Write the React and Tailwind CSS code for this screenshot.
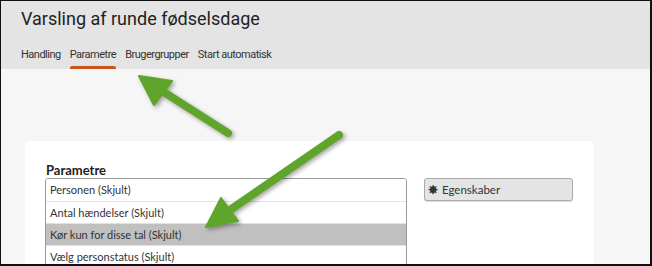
import React from "react";

const rows = [
  { label: "Personen (Skjult)" },
  { label: "Antal hændelser (Skjult)" },
  { label: "Kør kun for disse tal (Skjult)", active: true },
  { label: "Vælg personstatus (Skjult)" },
];

const tabs = ["Handling", "Parametre", "Brugergrupper", "Start automatisk"];

function Arrows() {
  return (
    <svg
      className="absolute inset-0 pointer-events-none"
      width="652"
      height="266"
      viewBox="0 0 652 266"
      style={{ filter: "drop-shadow(2px 2px 2px rgba(0,0,0,0.35))" }}
    >
      <g fill="#5fa42b" stroke="#5fa42b" strokeLinecap="round" strokeLinejoin="round">
        <line x1="227" y1="132" x2="158" y2="88" strokeWidth="8" />
        <polygon points="138,75 171,80 153,104" strokeWidth="2" />
        <line x1="338" y1="134" x2="226" y2="211" strokeWidth="8" />
        <polygon points="205,226 220,197 237,220" strokeWidth="2" />
      </g>
    </svg>
  );
}

export default function App() {
  return (
    <div className="relative w-[652px] h-[266px] overflow-hidden bg-[#f6f6f6] border-l border-t border-r-2 border-b-2 border-[#111] font-['Lato',sans-serif]">
      <div className="h-[68px] bg-[#e4e4e4] pl-[20px]">
        <h1 className="pt-[5px] text-[18px] leading-[26px] text-[#222] font-['Roboto',sans-serif]">
          Varsling af runde fødselsdage
        </h1>
        <div className="mt-[12px] flex gap-[9px] text-[11px] text-[#333] font-['Roboto',sans-serif] tracking-[-0.5px]">
          {tabs.map((t) => (
            <div key={t} className="relative h-[25px] leading-[22px]">
              {t}
              {t === "Parametre" && (
                <div className="absolute left-0 right-0 bottom-0 h-[3px] rounded-t-[2px] bg-[#c8561c]" />
              )}
            </div>
          ))}
        </div>
      </div>

      <div className="mt-[72px] ml-[24px] w-[569px] h-[140px] bg-white rounded-[5px] pt-[21px] pl-[20px] flex gap-[17px]">
        <div className="w-[362px]">
          <div className="text-[13px] font-bold text-[#222] leading-[16px] pl-[1px]">Parametre</div>
          <div className="border border-[#9a9a9a] rounded-t-[3px] overflow-hidden">
            {rows.map((r, i) => (
              <div
                key={r.label}
                className={`h-[22px] leading-[21px] pl-[4px] text-[11px] text-[#333] ${
                  i > 0 ? "border-t border-[#e2e2e2]" : ""
                } ${r.active ? "bg-[#c0c0c0]" : "bg-white"}`}
              >
                {r.label}
              </div>
            ))}
          </div>
        </div>
        <div className="pt-[16px]">
          <div className="w-[149px] h-[23px] bg-[#e4e4e4] border border-[#ababab] rounded-[3px] shadow-[0_1px_1px_rgba(0,0,0,0.15)] flex items-center pl-[3px] gap-[4px] text-[11.5px] text-[#333]">
            <span className="text-[12px] leading-none font-bold">✸</span>
            <span>Egenskaber</span>
          </div>
        </div>
      </div>

      <Arrows />
    </div>
  );
}
